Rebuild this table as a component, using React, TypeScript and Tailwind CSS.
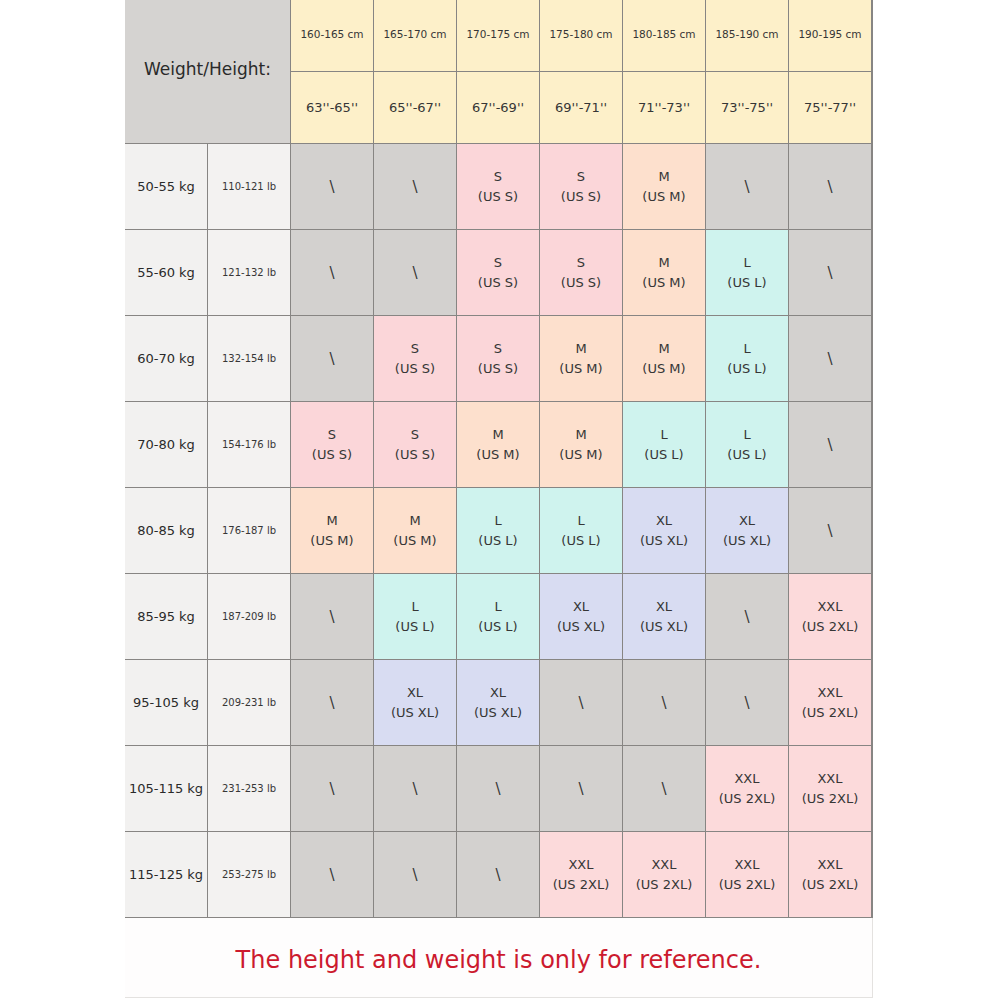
import React from "react";

type Sz = "-" | "S" | "M" | "L" | "XL" | "XXL";

const heightsCm = ["160-165 cm", "165-170 cm", "170-175 cm", "175-180 cm", "180-185 cm", "185-190 cm", "190-195 cm"];
const heightsIn = ["63''-65''", "65''-67''", "67''-69''", "69''-71''", "71''-73''", "73''-75''", "75''-77''"];

const rows: { kg: string; lb: string; cells: Sz[] }[] = [
  { kg: "50-55 kg", lb: "110-121 lb", cells: ["-", "-", "S", "S", "M", "-", "-"] },
  { kg: "55-60 kg", lb: "121-132 lb", cells: ["-", "-", "S", "S", "M", "L", "-"] },
  { kg: "60-70 kg", lb: "132-154 lb", cells: ["-", "S", "S", "M", "M", "L", "-"] },
  { kg: "70-80 kg", lb: "154-176 lb", cells: ["S", "S", "M", "M", "L", "L", "-"] },
  { kg: "80-85 kg", lb: "176-187 lb", cells: ["M", "M", "L", "L", "XL", "XL", "-"] },
  { kg: "85-95 kg", lb: "187-209 lb", cells: ["-", "L", "L", "XL", "XL", "-", "XXL"] },
  { kg: "95-105 kg", lb: "209-231 lb", cells: ["-", "XL", "XL", "-", "-", "-", "XXL"] },
  { kg: "105-115 kg", lb: "231-253 lb", cells: ["-", "-", "-", "-", "-", "XXL", "XXL"] },
  { kg: "115-125 kg", lb: "253-275 lb", cells: ["-", "-", "-", "XXL", "XXL", "XXL", "XXL"] },
];

const bg: Record<Sz, string> = {
  "-": "bg-[#d3d1cf]",
  S: "bg-[#fbd6d9]",
  M: "bg-[#fde0cd]",
  L: "bg-[#cff3ee]",
  XL: "bg-[#d8dcf2]",
  XXL: "bg-[#fcdadb]",
};

const us: Record<Sz, string> = {
  "-": "",
  S: "(US S)",
  M: "(US M)",
  L: "(US L)",
  XL: "(US XL)",
  XXL: "(US 2XL)",
};

const font = { fontFamily: '"DejaVu Sans", Verdana, sans-serif' };

export default function App() {
  return (
    <div className="w-[1000px] h-[1000px] bg-white text-[#363636]" style={font}>
      <div className="ml-[125px] w-[748px]">
        <div className="grid grid-cols-[repeat(9,82px)] grid-rows-[71px_71px_repeat(9,85px)] gap-px bg-[#878583] border-b border-[#878583] w-[748px] pr-px">
          <div className="col-span-2 row-span-2 bg-[#d5d3d1] flex items-center justify-center text-[17px] text-[#2a2a2a] pb-[4px]">
            Weight/Height:
          </div>
          {heightsCm.map((h) => (
            <div key={h} className="bg-[#fdf0c9] flex items-center justify-center text-[10.5px] pb-[2px]">
              {h}
            </div>
          ))}
          {heightsIn.map((h) => (
            <div key={h} className="bg-[#fdf0c9] flex items-center justify-center text-[13px]">
              {h}
            </div>
          ))}
          {rows.map((r) => (
            <React.Fragment key={r.kg}>
              <div className="bg-[#f2f1f0] flex items-center justify-center text-[13px] text-[#2a2a2a]">{r.kg}</div>
              <div className="bg-[#f3f2f1] flex items-center justify-center text-[10px]">{r.lb}</div>
              {r.cells.map((c, i) => (
                <div key={i} className={`${bg[c]} flex flex-col items-center justify-center text-[13px] leading-[20px]`}>
                  {c === "-" ? (
                    <span className="text-[15px]">\</span>
                  ) : (
                    <>
                      <span>{c}</span>
                      <span>{us[c]}</span>
                    </>
                  )}
                </div>
              ))}
            </React.Fragment>
          ))}
        </div>
        <div className="h-[80px] flex items-center justify-center border-b border-r border-[#e4e2e0] bg-[#fefdfd]">
          <span className="text-[24px] text-[#cc1a2e] pt-[4px]">
            The height and weight is only for reference.
          </span>
        </div>
      </div>
    </div>
  );
}
